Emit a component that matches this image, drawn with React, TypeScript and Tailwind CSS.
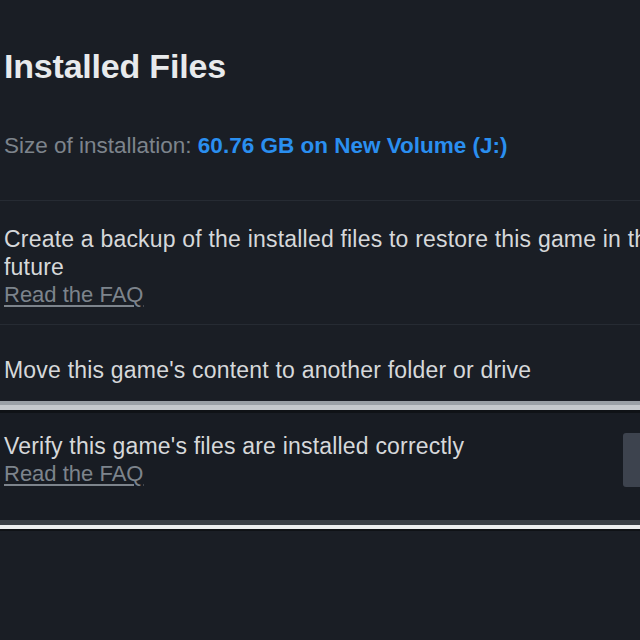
import React from "react";

export default function App() {
  return (
    <div
      className="w-[640px] h-[640px] overflow-hidden bg-[#1a1e25] text-[#d6d8da]"
      style={{ fontFamily: '"Liberation Sans", Arial, sans-serif' }}
    >
      <div className="pl-[4px]">
        <div className="h-[44px]" />
        <h1 className="h-[44px] flex items-center text-[34px] font-bold text-[#e8eaec] tracking-[-0.2px]">
          Installed Files
        </h1>
        <div className="h-[36px]" />
        <div className="h-[44px] flex items-center text-[22.5px] whitespace-nowrap">
          <span className="text-[#7d848c]">Size of installation:&nbsp;</span>
          <span className="text-[#2a8ff0] font-bold">60.76 GB on New Volume (J:)</span>
        </div>
      </div>
      <div className="h-[32px]" />
      <div className="h-[1px] bg-[#262b33]" />
      <div className="pl-[4px] pt-[24px] h-[123px] text-[23px] leading-[28px] tracking-[0.2px] whitespace-nowrap">
        <div>Create a backup of the installed files to restore this game in the</div>
        <div>future</div>
        <div className="text-[22px] text-[#7d848c] underline underline-offset-[3px] tracking-normal">Read the FAQ</div>
      </div>
      <div className="h-[1px] bg-[#262b33]" />
      <div className="pl-[4px] h-[76px] pt-[31px] text-[23px] leading-[28px] tracking-[0.2px] whitespace-nowrap">
        Move this game's content to another folder or drive
      </div>
      <div className="h-[4px] bg-[#9aa0a6]" />
      <div className="h-[5px] bg-[#c4c8cc]" />
      <div className="h-[3px] bg-[#0f1216]" />
      <div className="flex h-[107px] bg-[#181c23]">
        <div className="flex-1 pl-[4px] pt-[19px] text-[23px] leading-[28px] tracking-[0.2px] whitespace-nowrap">
          <div>Verify this game's files are installed correctly</div>
          <div className="text-[22px] text-[#7d848c] underline underline-offset-[3px] tracking-normal">Read the FAQ</div>
        </div>
        <div className="mt-[20px] w-[17px] h-[54px] bg-[#3d434e] rounded-l-[3px]" />
      </div>
      <div className="h-[5px] bg-[#3a3f46]" />
      <div className="h-[4px] bg-[#eceeef]" />
      <div className="h-[2px] bg-[#0f1216]" />
    </div>
  );
}
